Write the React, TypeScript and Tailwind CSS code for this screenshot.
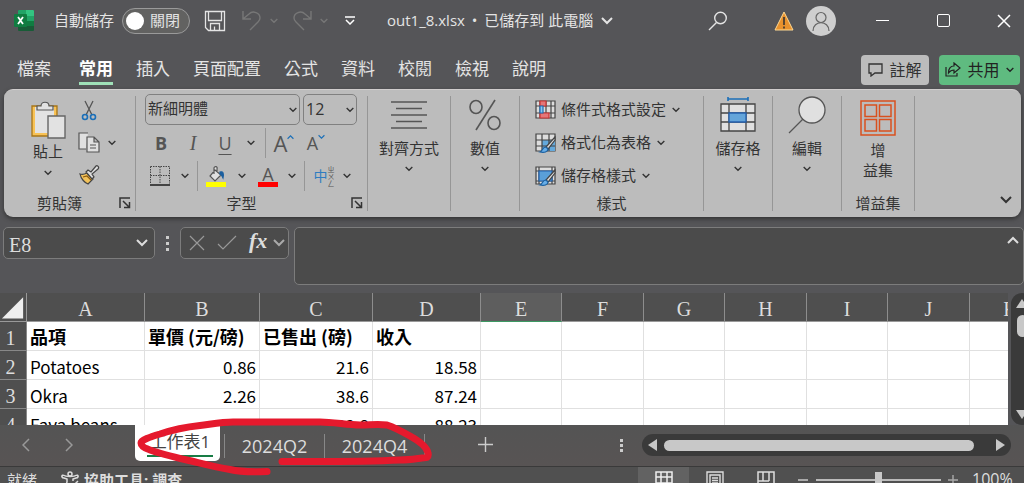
import { useState, type ReactNode } from "react";
import clsx from "clsx";

const UI_FONT = "font-['Open_Sans','Noto_Sans_CJK_TC',sans-serif]";
const CELL_FONT = "font-['Noto_Sans_CJK_TC',sans-serif]";
const SERIF_FONT = "font-['Liberation_Serif','Noto_Sans_CJK_TC',serif]";

const MENU = ["檔案", "常用", "插入", "頁面配置", "公式", "資料", "校閱", "檢視", "說明"];

const COLUMNS = [
  { name: "A", width: "w-[118px]" },
  { name: "B", width: "w-[115px]" },
  { name: "C", width: "w-[113px]" },
  { name: "D", width: "w-[108px]" },
  { name: "E", width: "w-[81px]" },
  { name: "F", width: "w-[82px]" },
  { name: "G", width: "w-[81px]" },
  { name: "H", width: "w-[82px]" },
  { name: "I", width: "w-[81px]" },
  { name: "J", width: "w-[82px]" },
  { name: "K", width: "w-[82px]" },
];

const ROWS = [
  ["品項", "單價 (元/磅)", "已售出 (磅)", "收入"],
  ["Potatoes", "0.86", "21.6", "18.58"],
  ["Okra", "2.26", "38.6", "87.24"],
  ["Fava beans", "2.69", "32.8", "88.23"],
];

const SHEETS = ["2024Q2", "2024Q4"];

function Chevron({ className = "w-2 h-2", up = false }: { className?: string; up?: boolean }) {
  return (
    <svg viewBox="0 0 12 8" className={clsx("shrink-0", className)} fill="none" stroke="currentColor" strokeWidth="2">
      <path d={up ? "M1 7l5-5 5 5" : "M1 1l5 5 5-5"} />
    </svg>
  );
}

function DropButton({ label, className }: { label: string; className: string }) {
  return (
    <button aria-label={label} className={clsx("flex h-6 items-center justify-center text-[#333]", className)}>
      <Chevron />
    </button>
  );
}

function Separator() {
  return <div className="my-[6px] w-px shrink-0 bg-[#969696]" />;
}

interface GroupProps {
  caption?: string;
  width: string;
  launcher?: boolean;
  children: ReactNode;
}

function Group({ caption, width, launcher, children }: GroupProps) {
  return (
    <div className={clsx("flex shrink-0 flex-col pb-[5px]", width)}>
      <div className="flex-1">{children}</div>
      <div className="flex h-[18px] items-center">
        <span className="flex-1 text-center leading-[18px]">{caption}</span>
        {launcher && (
          <button aria-label={`${caption}設定`} className="flex w-5 items-center justify-center">
            <svg viewBox="0 0 12 12" className="h-3 w-3" fill="none" stroke="#333" strokeWidth="1.5">
              <path d="M1 11V1h10M4 4l6 6M10.500 5v5.500H5" />
            </svg>
          </button>
        )}
      </div>
    </div>
  );
}

function BigButton({ icon, label }: { icon: ReactNode; label: string }) {
  return (
    <button className="flex w-full flex-col items-center pt-[5px] text-[#333]">
      <span className="flex h-10 items-center justify-center">{icon}</span>
      <span className="mt-[3px] leading-5">{label}</span>
      <Chevron className="mt-[7px] h-2 w-2" />
    </button>
  );
}

function ExcelLogo() {
  return (
    <svg viewBox="0 0 20 21" className="h-[21px] w-5">
      <rect x="4" width="16" height="21" rx="1" fill="#185c37" />
      <path d="M4 1a1 1 0 011-1h7v6H4z" fill="#21a366" />
      <path d="M12 0h7a1 1 0 011 1v5h-8z" fill="#33c481" />
      <path d="M12 6h8v5h-8z" fill="#21a366" />
      <path d="M4 6h8v5H4z" fill="#107c41" />
      <path d="M12 11h8v5h-8z" fill="#107c41" />
      <rect y="4" width="13" height="13" rx="1" fill="#107c41" />
      <path d="M4 7l5 7M9 7l-5 7" stroke="#fff" strokeWidth="1.800" />
    </svg>
  );
}

function TitleBar() {
  return (
    <header className="flex h-[41px] shrink-0 items-center pl-[14px] text-[15px] text-[#e4e4e4]">
      <ExcelLogo />
      <label className="ml-5 flex items-center gap-2">
        自動儲存
        <input type="checkbox" className="peer sr-only" />
        <span className="flex h-[26px] w-[68px] items-center gap-[6px] rounded-full border border-[#9a9a9a] bg-[#626261] pl-[3px]">
          <span className="h-[18px] w-[18px] rounded-full bg-white" />
          關閉
        </span>
      </label>
      <button aria-label="儲存" className="ml-[14px]">
        <svg viewBox="0 0 22 22" className="h-[22px] w-[22px]" fill="none" stroke="#e4e4e4" strokeWidth="1.300">
          <path d="M1.500 1.500h19v19h-16l-3-3zM4.500 1.500v9h13v-9M6.500 20.500v-7h9v7M10.500 20.500v-4" />
        </svg>
      </button>
      <button aria-label="復原" className="ml-[16px] text-[#777]">
        <svg viewBox="0 0 20 22" className="h-[22px] w-5" fill="none" stroke="currentColor" strokeWidth="1.400">
          <path d="M1 1v8h8M1 9l6-5c4-4 11-1 11 4 0 2-1 3-2 4l-8 8" />
        </svg>
      </button>
      <Chevron className="ml-2 h-[6px] w-2 text-[#777]" />
      <button aria-label="重做" className="ml-[14px] text-[#777]">
        <svg viewBox="0 0 20 22" className="h-[22px] w-5" fill="none" stroke="currentColor" strokeWidth="1.400">
          <path d="M19 1v8h-8M19 9l-6-5C9 0 2 3 2 8c0 2 1 3 2 4l8 8" />
        </svg>
      </button>
      <Chevron className="ml-2 h-[6px] w-2 text-[#777]" />
      <button aria-label="自訂快速存取工具列" className="ml-[17px]">
        <svg viewBox="0 0 10 9" className="h-[9px] w-[10px]" fill="none" stroke="#fff" strokeWidth="1.500">
          <path d="M0 1h10M1 4l4 4 4-4" />
        </svg>
      </button>
      <button className="ml-8 flex items-center gap-2 whitespace-nowrap">
        <span>
          out1_8.xlsx <span className="mx-[3px]">•</span> 已儲存到 此電腦
        </span>
        <Chevron className="h-2 w-3" />
      </button>
      <button aria-label="搜尋" className="mr-[46px] ml-auto">
        <svg viewBox="0 0 20 20" className="h-5 w-5" fill="none" stroke="#e4e4e4" strokeWidth="1.400">
          <circle cx="12.500" cy="7" r="5.800" />
          <path d="M8.500 11.500L1 19" />
        </svg>
      </button>
      <svg viewBox="0 0 20 20" className="mr-3 h-5 w-5" aria-label="警告">
        <path d="M10 1l9 18H1z" fill="#e8912d" stroke="#ffd991" />
        <path d="M10 6v8M10 15.500v2" stroke="#333" strokeWidth="1.600" />
      </svg>
      <button aria-label="帳戶" className="mr-[26px] h-[30px] w-[30px] rounded-full bg-[#cfcfcf]">
        <svg viewBox="0 0 30 30" className="h-[30px] w-[30px]" fill="none" stroke="#666" strokeWidth="1.200">
          <circle cx="15" cy="11.500" r="5" />
          <path d="M7 25c0-11 16-11 16 0" />
        </svg>
      </button>
      <div className="flex gap-[21px]">
        <button aria-label="最小化" className="flex h-8 w-10 items-center justify-center">
          <span className="h-px w-[13px] bg-white" />
        </button>
        <button aria-label="最大化" className="flex h-8 w-10 items-center justify-center">
          <span className="h-[13px] w-[13px] rounded-[2px] border border-white" />
        </button>
        <button aria-label="關閉視窗" className="flex h-8 w-10 items-center justify-center">
          <svg viewBox="0 0 14 14" className="h-[14px] w-[14px]" stroke="#fff" strokeWidth="1.500">
            <path d="M1 1l12 12M13 1L1 13" />
          </svg>
        </button>
      </div>
    </header>
  );
}

function MenuBar() {
  const [active, setActive] = useState("常用");
  return (
    <nav className="flex h-12 shrink-0 items-center pr-1 pl-[17px] text-[17px] text-[#e4e4e4]">
      <div className="flex gap-[23px] pt-[5px]">
        {MENU.map((item) => (
          <button
            key={item}
            onClick={() => setActive(item)}
            className={clsx(
              "h-[35px] border-b-[3px] pt-[6px] leading-[26px] whitespace-nowrap first:mr-[5px]",
              active === item ? "border-[#9fe0b8] font-bold text-white" : "border-transparent",
            )}
          >
            {item}
          </button>
        ))}
      </div>
      <button className="mt-[9px] ml-auto flex h-[30px] w-[68px] items-center justify-center gap-[6px] rounded bg-[#bcbcbc] text-[#333]">
        <svg viewBox="0 0 15 14" className="h-[14px] w-[15px]" fill="none" stroke="#333" strokeWidth="1.300">
          <path d="M1 1h13v9H7l-4 3v-3H1z" />
        </svg>
        <span className="text-base">註解</span>
      </button>
      <button className="mt-[9px] ml-[10px] flex h-[30px] w-[81px] items-center justify-center gap-[6px] rounded bg-[#5fbb80] text-[#222]">
        <svg viewBox="0 0 16 15" className="h-[15px] w-4" fill="none" stroke="#222" strokeWidth="1.200">
          <path d="M1 5v9h11v-3M9 1l6 5-6 5V8C6 8 5 9 3.500 11 3.500 6 6 4 9 4z" />
        </svg>
        <span className="text-base">共用</span>
        <Chevron />
      </button>
    </nav>
  );
}

function PasteIcon() {
  return (
    <svg viewBox="0 0 36 40" className="h-10 w-9">
      <path d="M2 6h25v30H2z" fill="#f8c255" stroke="#a77518" strokeWidth="1.300" />
      <path d="M5 7h19v26H5z" fill="#e2e2e2" />
      <path d="M7 10V6h4c0-5 8-5 8 0h4v4z" fill="#e2e2e2" stroke="#555" strokeWidth="1.200" />
      <path d="M18 16h17v22H18z" fill="#e2e2e2" stroke="#666" strokeWidth="1.400" />
    </svg>
  );
}

function ClipboardGroup() {
  return (
    <Group caption="剪貼簿" width="w-[131px]" launcher>
      <div className="flex pt-[10px] pl-[26px]">
        <button className="flex w-9 flex-col items-center">
          <PasteIcon />
          <span className="mt-px leading-5 whitespace-nowrap">貼上</span>
          <Chevron className="mt-[8px] h-2 w-2" />
        </button>
        <div className="ml-[12px] flex flex-col gap-[11px]">
          <button aria-label="剪下">
            <svg viewBox="0 0 22 21" className="h-[21px] w-[22px]" fill="none" strokeWidth="1.300">
              <path d="M7 1l7 14M15 1L8 15" stroke="#555" />
              <circle cx="7" cy="17" r="2.500" stroke="#1b6fb8" strokeWidth="1.600" />
              <circle cx="15" cy="17" r="2.500" stroke="#1b6fb8" strokeWidth="1.600" />
            </svg>
          </button>
          <span className="flex items-center">
            <button aria-label="複製">
              <svg viewBox="0 0 22 21" className="h-[21px] w-[22px]" fill="#e0e0e0" stroke="#555" strokeWidth="1.200">
                <path d="M8 17H1V1h9" />
                <path d="M9 5h7l5 5v10H9zM16 5v5h5M12 13h6M12 16h6" />
              </svg>
            </button>
            <DropButton label="複製選項" className="-my-1 w-6" />
          </span>
          <button aria-label="複製格式">
            <svg viewBox="0 0 22 21" className="h-[21px] w-[22px]" strokeWidth="1.200">
              <path d="M2 10c3 1 5 0 7-1l6 6-5 5c-3-1-7-5-8-10z" fill="#f2c25a" stroke="#444" />
              <path d="M8 8l2-2 3 2 5-6c1-1 4 1 2 3l-6 5 2 3-2 2z" fill="#ddd" stroke="#444" />
              <path d="M5 13l4-1 4 4" stroke="#8a5a10" fill="none" />
            </svg>
          </button>
        </div>
      </div>
    </Group>
  );
}

function FontGroup() {
  return (
    <Group caption="字型" width="w-[231px]" launcher>
      <div className="flex gap-[3px] pt-[4px] pl-[9px]">
        <div className="relative w-[155px]">
          <select
            aria-label="字型"
            className="h-[31px] w-full appearance-none rounded-[5px] border border-[#808080] pb-[2px] pl-[2px] text-[#333]"
          >
            <option>新細明體</option>
          </select>
          <Chevron className="pointer-events-none absolute top-3 right-[3px] h-2 w-2" />
        </div>
        <div className="relative w-[54px]">
          <select
            aria-label="字型大小"
            className="h-[31px] w-full appearance-none rounded-[5px] border border-[#808080] pb-[2px] pl-[2px] text-base text-[#333]"
          >
            <option>12</option>
          </select>
          <Chevron className="pointer-events-none absolute top-3 right-[3px] h-2 w-2" />
        </div>
      </div>
      <div className="mt-[3px] flex h-[30px] items-center pl-[9px] text-lg text-[#555]">
        <button className="w-8 font-bold">B</button>
        <button className="w-8 font-['Liberation_Serif',serif] text-xl italic">I</button>
        <button className="w-8 underline underline-offset-4">U</button>
        <DropButton label="底線選項" className="w-5" />
        <div className="mx-1 h-[30px] w-px bg-[#969696]" />
        <button aria-label="放大字型" className="flex w-7 items-center justify-center">
          <span className="text-[22px] leading-6">A</span>
          <Chevron up className="mb-3 h-2 w-[7px] text-[#1b6fb8]" />
        </button>
        <button aria-label="縮小字型" className="flex w-9 items-center justify-center">
          <span className="leading-6">A</span>
          <Chevron className="mb-3 h-2 w-[7px] text-[#1b6fb8]" />
        </button>
      </div>
      <div className="mt-[3px] flex h-[30px] items-center pl-[9px] text-[#555]">
        <button aria-label="框線" className="flex w-[30px] justify-center">
          <svg viewBox="0 0 20 20" className="h-5 w-5" fill="none" stroke="#444">
            <path d="M.5.500h19v17M.5.500v17M10 .5v17M.5 9.500h19" strokeDasharray="1.500 1" />
            <path d="M0 19h20" strokeWidth="2" />
          </svg>
        </button>
        <DropButton label="框線選項" className="w-5" />
        <div className="mx-[2px] h-[30px] w-px bg-[#969696]" />
        <button aria-label="填滿色彩" className="flex w-8 flex-col items-center">
          <svg viewBox="0 0 20 16" className="h-4 w-5" fill="#e0e0e0" stroke="#555" strokeWidth="1.200">
            <path d="M9 4l6 5-6 6-5-5zM8 8V2c0-2 4-2 3 1v3" />
            <path d="M14 6c3-1 4 1 3 6-1-2-1-3-3-4z" fill="#1b5f9f" stroke="#1b5f9f" />
          </svg>
          <span className="h-[5px] w-5 bg-[#ffff00]" />
        </button>
        <DropButton label="填滿選項" className="w-5" />
        <button aria-label="字型色彩" className="flex w-8 flex-col items-center">
          <span className="text-lg leading-4">A</span>
          <span className="h-[5px] w-5 bg-[#ff0000]" />
        </button>
        <DropButton label="字型色彩選項" className="w-4" />
        <div className="mx-1 h-[30px] w-px bg-[#969696]" />
        <button aria-label="注音標示" className="flex w-[30px] items-center justify-center">
          <span className="text-sm text-[#2f7cc0]">中</span>
          <span className="flex flex-col text-[7px] leading-[7px]">
            <span>ㄓ</span>
            <span>ㄨ</span>
            <span>ㄥ</span>
          </span>
        </button>
        <DropButton label="注音選項" className="w-4" />
      </div>
    </Group>
  );
}

function StyleIcon({ kind }: { kind: "condition" | "table" | "cell" }) {
  return (
    <svg viewBox="0 0 21 20" className="h-5 w-[21px]" fill="none" strokeWidth="1.200">
      <path d="M1 1h19v17H1z" fill="#ddd" stroke="#444" />
      {kind === "condition" && (
        <>
          <path d="M5 1v17M11 1v17M16 1v17M1 6h19M1 13h19" stroke="#444" />
          <path d="M5 1h6v5H5zM5 13h9v5H5z" fill="#e37779" stroke="#c33" />
          <path d="M5 6h3v7H5z" fill="#8cc4ef" stroke="#1b6fb8" />
        </>
      )}
      {kind === "table" && (
        <>
          <path d="M7 7h13v11H7z" fill="#64a9dc" />
          <path d="M7 1v17M14 1v17M1 7h19M1 13h19" stroke="#444" />
        </>
      )}
      {kind === "cell" && (
        <>
          <path d="M4 1v17M17 1v17M1 5h19M1 15h19" stroke="#444" />
          <path d="M4 5h13v10H4z" fill="#5a9fd8" stroke="#2263ae" />
        </>
      )}
      {kind !== "condition" && (
        <>
          <path d="M20 4L11 14l2 2 7-9z" fill="#ddd" stroke="#444" />
          <path d="M11 14c-4 0-3 4-6 5 4 1 8 0 8-3z" fill="#68aee8" stroke="#1b5f9f" />
        </>
      )}
    </svg>
  );
}

function StyleButton({ kind, label }: { kind: "condition" | "table" | "cell"; label: string }) {
  return (
    <button className="flex h-[33px] items-center whitespace-nowrap text-[#333]">
      <StyleIcon kind={kind} />
      <span className="mr-[6px] ml-[5px]">{label}</span>
      <Chevron />
    </button>
  );
}

function Ribbon() {
  return (
    <section className="mr-[3px] ml-1 flex h-32 shrink-0 rounded-[9px] border-t border-[#d0cdcd] bg-[#bcbcbc] text-[15px] text-[#333] shadow-[0_2px_4px_#333]">
      <ClipboardGroup />
      <Separator />
      <FontGroup />
      <Separator />
      <Group width="w-[82px]">
        <BigButton
          label="對齊方式"
          icon={
            <svg viewBox="0 0 36 30" className="h-[30px] w-9" stroke="#555" strokeWidth="1.300">
              <path d="M0 2h36M5 8.500h26M0 15h36M5 21.500h26M0 28h36" />
            </svg>
          }
        />
      </Group>
      <Separator />
      <Group width="w-[68px]">
        <BigButton
          label="數值"
          icon={
            <svg viewBox="0 0 32 32" className="h-8 w-8" fill="none" stroke="#555" strokeWidth="1.600">
              <ellipse cx="7" cy="8" rx="6" ry="6.500" />
              <ellipse cx="25" cy="24" rx="6" ry="6.500" />
              <path d="M26 1L7 31" />
            </svg>
          }
        />
      </Group>
      <Separator />
      <Group caption="樣式" width="w-[183px]">
        <div className="flex flex-col items-start pt-[3px] pl-[15px]">
          <StyleButton kind="condition" label="條件式格式設定" />
          <StyleButton kind="table" label="格式化為表格" />
          <StyleButton kind="cell" label="儲存格樣式" />
        </div>
      </Group>
      <Separator />
      <Group width="w-[68px]">
        <BigButton
          label="儲存格"
          icon={
            <svg viewBox="0 0 36 36" className="h-9 w-9" fill="none" strokeWidth="1.300">
              <path d="M8 0v4M28 0v4M8 2h20" stroke="#1b6fb8" strokeWidth="1.600" />
              <path d="M1 7h34v27H1z" fill="#e0e0e0" stroke="#444" />
              <path d="M9 7v27M26 7v27M1 16h34M1 25h34" stroke="#444" />
              <path d="M9 16h17v9H9z" fill="#64a5da" stroke="#2460ae" />
            </svg>
          }
        />
      </Group>
      <Separator />
      <Group width="w-[68px]">
        <BigButton
          label="編輯"
          icon={
            <svg viewBox="0 0 38 38" className="h-[38px] w-[38px]" stroke="#555" strokeWidth="1.300">
              <circle cx="24" cy="14" r="13" fill="#e0e0e0" />
              <path d="M15 23L1 37" />
            </svg>
          }
        />
      </Group>
      <Separator />
      <Group caption="增益集" width="w-[72px]">
        <button className="flex w-full flex-col items-center pt-[10px]">
          <svg viewBox="0 0 36 36" className="h-9 w-9" fill="none" stroke="#d9501e" strokeWidth="1.500">
            <path d="M1 1h34v34H1zM5 5h11.500v11.500H5zM19.500 5H31v11.500H19.500zM5 19.500h11.500V31H5zM19.500 19.500H31V31H19.500z" />
          </svg>
          <span className="mt-[4px] leading-5">
            增
            <br />
            益集
          </span>
        </button>
      </Group>
      <Separator />
      <button aria-label="摺疊功能區" className="mt-auto mr-[9px] mb-[13px] ml-auto">
        <Chevron className="h-2 w-3" />
      </button>
    </section>
  );
}

function FormulaBar() {
  return (
    <div className="flex h-[76px] shrink-0 items-start pt-[10px] pl-[3px] text-[#ddd]">
      <div className="flex h-8 w-[152px] items-center rounded-[5px] border border-[#7c7c7c] bg-[#4b4b4b] pr-[6px] pl-[5px]">
        <input aria-label="名稱方塊" defaultValue="E8" className={clsx("min-w-0 flex-1 pt-1 text-xl outline-none", SERIF_FONT)} />
        <Chevron className="h-2 w-3" />
      </div>
      <div className="mt-[9px] ml-[11px] flex w-[4px] flex-col gap-[3px]">
        <span className="h-[3px] w-[3px] bg-[#ccc]" />
        <span className="h-[3px] w-[3px] bg-[#ccc]" />
        <span className="h-[3px] w-[3px] bg-[#ccc]" />
      </div>
      <div className="ml-[10px] flex h-8 w-[109px] items-center rounded-[5px] border border-[#7c7c7c] bg-[#4b4b4b] pl-2">
        <button aria-label="取消">
          <svg viewBox="0 0 16 16" className="h-4 w-4" stroke="#999" strokeWidth="1.200">
            <path d="M1 1l14 14M15 1L1 15" />
          </svg>
        </button>
        <button aria-label="輸入" className="ml-3">
          <svg viewBox="0 0 20 16" className="h-4 w-5" fill="none" stroke="#999" strokeWidth="1.200">
            <path d="M1 9l5 5L19 1" />
          </svg>
        </button>
        <button className="ml-3 pb-1 font-['Liberation_Serif',serif] text-[22px] leading-6 font-bold italic">fx</button>
        <Chevron className="ml-[6px] h-2 w-3 text-[#aaa]" />
      </div>
      <div className="ml-[5px] flex h-[58px] flex-1 items-start rounded-[5px] border border-[#7c7c7c] bg-[#4b4b4b]">
        <textarea aria-label="資料編輯列" className="h-full min-w-0 flex-1 resize-none px-2 outline-none" />
        <button aria-label="摺疊資料編輯列" className="mt-[8px] mr-[4px] flex">
          <Chevron up className="h-2 w-3" />
        </button>
      </div>
    </div>
  );
}

function SheetGrid() {
  return (
    <div className="flex min-h-0 flex-1">
      <div className="min-w-0 flex-1 overflow-hidden bg-white">
        <table className={clsx("w-[1032px] table-fixed border-separate border-spacing-0 text-black", CELL_FONT)}>
          <thead>
            <tr className={clsx("h-[29px] bg-[#4f4f4f] text-xl text-[#ddd]", SERIF_FONT)}>
              <th aria-label="全選" className="w-[27px] border-r border-b border-[#999] p-0">
                <svg viewBox="0 0 27 28" className="h-7 w-[26px]">
                  <path d="M24 4v22H2z" fill="#eee" />
                </svg>
              </th>
              {COLUMNS.map((col) => (
                <th
                  key={col.name}
                  className={clsx(
                    "border-r border-b border-r-[#8d8d8d] p-0 pt-1 leading-6 font-normal",
                    col.width,
                    col.name === "E" ? "border-b-[#3d9963] bg-[#5e5e5e]" : "border-b-[#999]",
                  )}
                >
                  {col.name}
                </th>
              ))}
            </tr>
          </thead>
          <tbody>
            {ROWS.map((row, r) => (
              <tr key={row[0]} className="h-[29px]">
                <th className={clsx("border-r border-b border-[#888] bg-[#4f4f4f] p-0 pt-1 pr-[5px] text-xl leading-6 font-normal text-[#ddd]", SERIF_FONT)}>
                  {r + 1}
                </th>
                {COLUMNS.map((col, c) => (
                  <td
                    key={col.name}
                    className={clsx(
                      "border-r border-b border-[#e0e0e0] px-[3px] py-0 whitespace-nowrap",
                      r === 0 ? "text-lg leading-7 font-bold" : "pt-1 text-[17px] leading-6",
                      r > 0 && c > 0 && "text-right",
                    )}
                  >
                    {row[c]}
                  </td>
                ))}
              </tr>
            ))}
          </tbody>
        </table>
      </div>
      <div className="w-4 shrink-0 overflow-hidden pl-[3px]">
        <div className="flex h-full w-[22px] flex-col items-center rounded-full bg-[#3a3a3a] py-[6px] text-[#c8c8c8]">
          <svg viewBox="0 0 12 9" className="h-[9px] w-3" fill="currentColor">
            <path d="M6 0l6 9H0z" />
          </svg>
          <span className="mt-[7px] h-[22px] w-[11px] rounded-full bg-[#c8c8c8]" />
          <svg viewBox="0 0 12 9" className="mt-auto h-[9px] w-3" fill="currentColor">
            <path d="M0 0h12L6 9z" />
          </svg>
        </div>
      </div>
    </div>
  );
}

function Scribble() {
  return (
    <svg
      viewBox="0 0 310 64"
      className="pointer-events-none absolute -top-2 left-[130px] h-16 w-[310px]"
      fill="none"
      stroke="#e5192d"
      strokeWidth="7"
      strokeLinecap="round"
      strokeLinejoin="round"
    >
      <path d="M137 54.500C125 55 110 55 100 52.500 84 50 70 46 57 43 44 40 31 37 20 33 14 31 11 29 11 26c0-3 9-6 19-9 12-4 26-7 40-8.500C82 7 92 5 103 5h87c14 0 27 3 40 3 10 0 18-1 27 0 9 3 16 7 23 11 9 5 17 11 18 17 1 5-1 5-6 5-8 1-14 2-22 2-40 2-80 1.500-118 1.500" />
    </svg>
  );
}

function SheetTabs() {
  return (
    <div className="relative flex h-[41px] shrink-0 items-start bg-gradient-to-b from-[#545454] to-[#585454] text-[#ddd]">
      <button aria-label="上一張" className="mt-[13px] ml-[22px]">
        <svg viewBox="0 0 8 14" className="h-[14px] w-2" fill="none" stroke="#999" strokeWidth="1.500">
          <path d="M7 1L1 7l6 6" />
        </svg>
      </button>
      <button aria-label="下一張" className="mt-[13px] ml-[35px]">
        <svg viewBox="0 0 8 14" className="h-[14px] w-2" fill="none" stroke="#999" strokeWidth="1.500">
          <path d="M1 1l6 6-6 6" />
        </svg>
      </button>
      <button className="ml-[62px] flex h-9 w-[85px] justify-center rounded-b-[5px] bg-white pt-[5px] pl-[5px] text-[17px] text-[#444]">
        <span className="h-[27px] border-b-2 border-[#187c45] px-[3px] leading-6">工作表1</span>
      </button>
      <span className="mt-[9px] ml-1 h-6 w-px bg-[#888]" />
      {SHEETS.map((name) => (
        <button key={name} className="mt-[9px] h-6 w-[100px] border-r border-[#888] text-lg leading-6">
          {name}
        </button>
      ))}
      <button aria-label="新增工作表" className="mt-[12px] ml-[53px]">
        <svg viewBox="0 0 15 15" className="h-[15px] w-[15px]" stroke="#ccc" strokeWidth="1.400">
          <path d="M7.500 0v15M0 7.500h15" />
        </svg>
      </button>
      <div className="mt-[14px] ml-auto flex flex-col gap-[2px]">
        <span className="h-[3px] w-[3px] bg-[#ccc]" />
        <span className="h-[3px] w-[3px] bg-[#ccc]" />
        <span className="h-[3px] w-[3px] bg-[#ccc]" />
      </div>
      <div className="mt-[9px] mr-[13px] ml-[19px] flex h-[22px] w-[36%] items-center rounded-full bg-[#3a3a3a] px-[6px] text-[#c8c8c8]">
        <svg viewBox="0 0 9 12" className="h-3 w-[9px]" fill="currentColor">
          <path d="M9 0v12L0 6z" />
        </svg>
        <span className="mr-[22px] ml-[7px] h-[11px] flex-1 rounded-full bg-[#c8c8c8]" />
        <svg viewBox="0 0 9 12" className="h-3 w-[9px]" fill="currentColor">
          <path d="M0 0v12l9-6z" />
        </svg>
      </div>
      <Scribble />
    </div>
  );
}

function StatusBar() {
  return (
    <footer className="flex h-[17px] shrink-0 items-start overflow-hidden border-t border-[#3a3a3a] bg-[#505050] pl-[7px] text-[15px] text-[#ddd]">
      <span className="mt-[3px] leading-5">就緒</span>
      <svg viewBox="0 0 18 18" className="mt-1 ml-6 h-[18px] w-[18px]" fill="none" stroke="#ddd" strokeWidth="1.500">
        <circle cx="9" cy="3" r="2" />
        <path d="M2 4c-2 1-1 3 1 3l3 1v3l-2 6M16 4c2 1 1 3-1 3l-3 1v2M2 4c3 2 11 2 14 0M10 13l2 2 5-5" />
      </svg>
      <span className="mt-[3px] ml-[5px] leading-5 font-bold">協助工具: 調查</span>
      <button aria-label="標準模式" className="ml-auto flex h-7 w-[51px] justify-center bg-[#626262] pt-1">
        <svg viewBox="0 0 18 18" className="h-[18px] w-[18px]" fill="none" stroke="#eee" strokeWidth="1.500">
          <path d="M1 1h16v16H1zM6 1v16M12 1v16M1 6h16M1 12h16" />
        </svg>
      </button>
      <button aria-label="整頁模式" className="flex h-7 w-[51px] justify-center pt-1">
        <svg viewBox="0 0 18 18" className="h-[18px] w-[18px]" fill="none" stroke="#ddd" strokeWidth="1.400">
          <path d="M1 1h16v16H1zM4 17V4h10v13M6 7h6M6 9.500h6M6 12h6" />
        </svg>
      </button>
      <button aria-label="分頁預覽" className="flex h-7 w-[51px] justify-center pt-1">
        <svg viewBox="0 0 18 18" className="h-[18px] w-[18px]" fill="none" stroke="#ddd" strokeWidth="1.500">
          <path d="M1 1h16v16H1zM6 1v9M12 1v9M1 10h11" />
        </svg>
      </button>
      <button aria-label="縮小" className="mt-[12px] ml-[7px] h-[2px] w-[10px] bg-[#aaa]" />
      <input
        type="range"
        aria-label="縮放"
        defaultValue={50}
        className="mt-1 ml-2 h-[18px] w-[125px] appearance-none bg-[linear-gradient(#bbb,#bbb)] bg-[length:100%_2px] bg-center bg-no-repeat [&::-webkit-slider-thumb]:h-4 [&::-webkit-slider-thumb]:w-[7px] [&::-webkit-slider-thumb]:appearance-none [&::-webkit-slider-thumb]:bg-[#c8c8c8]"
      />
      <button aria-label="放大" className="mt-[8px] ml-[7px]">
        <svg viewBox="0 0 10 10" className="h-[10px] w-[10px]" stroke="#aaa" strokeWidth="1.400">
          <path d="M5 0v10M0 5h10" />
        </svg>
      </button>
      <span className="mt-[2px] mr-3 ml-[14px] w-10 text-base leading-5">100%</span>
    </footer>
  );
}

export default function App() {
  return (
    <div className={clsx("flex h-screen flex-col overflow-hidden bg-[#555558]", UI_FONT)}>
      <TitleBar />
      <MenuBar />
      <Ribbon />
      <FormulaBar />
      <SheetGrid />
      <SheetTabs />
      <StatusBar />
    </div>
  );
}
